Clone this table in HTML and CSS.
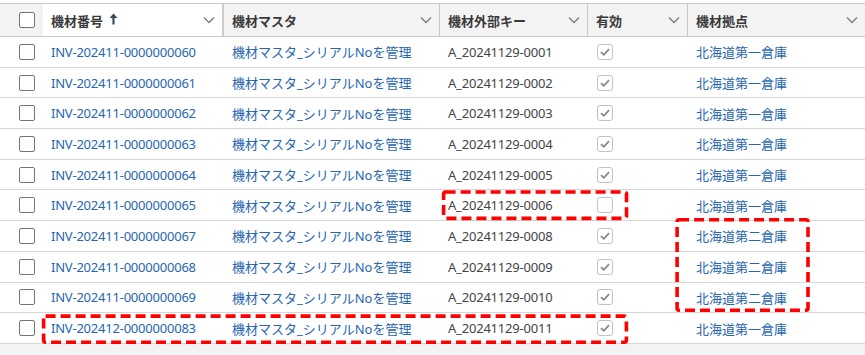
FILE: index.html
```html
<!DOCTYPE html>
<html lang="ja">
<head>
<meta charset="utf-8">
<link rel="stylesheet" href="styles.css">
</head>
<body>
<div class="page">
  <div class="grid">
    <div class="row head">
      <div class="cell cb"><span class="box"></span></div>
      <div class="cell hc sorted"><span class="ht">機材番号<svg class="arrow" width="9" height="12" viewBox="0 0 9 12"><path d="M4.5 0.5 L8.5 5 L5.6 5 L5.6 11.5 L3.4 11.5 L3.4 5 L0.5 5 Z" fill="#3f4a59"/></svg></span><svg class="chev" width="12" height="8" viewBox="0 0 12 8"><path d="M1 1.5 L6 6.5 L11 1.5" fill="none" stroke="#7a7a7a" stroke-width="1.3"/></svg></div>
      <div class="cell hc"><span class="ht">機材マスタ</span><svg class="chev" width="12" height="8" viewBox="0 0 12 8"><path d="M1 1.5 L6 6.5 L11 1.5" fill="none" stroke="#7a7a7a" stroke-width="1.3"/></svg></div>
      <div class="cell hc"><span class="ht">機材外部キー</span><svg class="chev" width="12" height="8" viewBox="0 0 12 8"><path d="M1 1.5 L6 6.5 L11 1.5" fill="none" stroke="#7a7a7a" stroke-width="1.3"/></svg></div>
      <div class="cell hc"><span class="ht">有効</span><svg class="chev" width="12" height="8" viewBox="0 0 12 8"><path d="M1 1.5 L6 6.5 L11 1.5" fill="none" stroke="#7a7a7a" stroke-width="1.3"/></svg></div>
      <div class="cell hc last"><span class="ht">機材拠点</span><svg class="chev" width="12" height="8" viewBox="0 0 12 8"><path d="M1 1.5 L6 6.5 L11 1.5" fill="none" stroke="#7a7a7a" stroke-width="1.3"/></svg></div>
    </div>

    <div class="row"><div class="cell cb"><span class="box"></span></div><div class="cell link num">INV-202411-0000000060</div><div class="cell link">機材マスタ_シリアルNoを管理</div><div class="cell txt">A_20241129-0001</div><div class="cell chk"><span class="ck on"><svg width="10" height="8" viewBox="0 0 10 8"><path d="M1 4.2 L3.8 6.8 L9 1.2" fill="none" stroke="#858585" stroke-width="1.7"/></svg></span></div><div class="cell link">北海道第一倉庫</div></div>
    <div class="row"><div class="cell cb"><span class="box"></span></div><div class="cell link num">INV-202411-0000000061</div><div class="cell link">機材マスタ_シリアルNoを管理</div><div class="cell txt">A_20241129-0002</div><div class="cell chk"><span class="ck on"><svg width="10" height="8" viewBox="0 0 10 8"><path d="M1 4.2 L3.8 6.8 L9 1.2" fill="none" stroke="#858585" stroke-width="1.7"/></svg></span></div><div class="cell link">北海道第一倉庫</div></div>
    <div class="row"><div class="cell cb"><span class="box"></span></div><div class="cell link num">INV-202411-0000000062</div><div class="cell link">機材マスタ_シリアルNoを管理</div><div class="cell txt">A_20241129-0003</div><div class="cell chk"><span class="ck on"><svg width="10" height="8" viewBox="0 0 10 8"><path d="M1 4.2 L3.8 6.8 L9 1.2" fill="none" stroke="#858585" stroke-width="1.7"/></svg></span></div><div class="cell link">北海道第一倉庫</div></div>
    <div class="row"><div class="cell cb"><span class="box"></span></div><div class="cell link num">INV-202411-0000000063</div><div class="cell link">機材マスタ_シリアルNoを管理</div><div class="cell txt">A_20241129-0004</div><div class="cell chk"><span class="ck on"><svg width="10" height="8" viewBox="0 0 10 8"><path d="M1 4.2 L3.8 6.8 L9 1.2" fill="none" stroke="#858585" stroke-width="1.7"/></svg></span></div><div class="cell link">北海道第一倉庫</div></div>
    <div class="row"><div class="cell cb"><span class="box"></span></div><div class="cell link num">INV-202411-0000000064</div><div class="cell link">機材マスタ_シリアルNoを管理</div><div class="cell txt">A_20241129-0005</div><div class="cell chk"><span class="ck on"><svg width="10" height="8" viewBox="0 0 10 8"><path d="M1 4.2 L3.8 6.8 L9 1.2" fill="none" stroke="#858585" stroke-width="1.7"/></svg></span></div><div class="cell link">北海道第一倉庫</div></div>
    <div class="row"><div class="cell cb"><span class="box"></span></div><div class="cell link num">INV-202411-0000000065</div><div class="cell link">機材マスタ_シリアルNoを管理</div><div class="cell txt">A_20241129-0006</div><div class="cell chk"><span class="ck"></span></div><div class="cell link">北海道第一倉庫</div></div>
    <div class="row"><div class="cell cb"><span class="box"></span></div><div class="cell link num">INV-202411-0000000067</div><div class="cell link">機材マスタ_シリアルNoを管理</div><div class="cell txt">A_20241129-0008</div><div class="cell chk"><span class="ck on"><svg width="10" height="8" viewBox="0 0 10 8"><path d="M1 4.2 L3.8 6.8 L9 1.2" fill="none" stroke="#858585" stroke-width="1.7"/></svg></span></div><div class="cell link">北海道第二倉庫</div></div>
    <div class="row"><div class="cell cb"><span class="box"></span></div><div class="cell link num">INV-202411-0000000068</div><div class="cell link">機材マスタ_シリアルNoを管理</div><div class="cell txt">A_20241129-0009</div><div class="cell chk"><span class="ck on"><svg width="10" height="8" viewBox="0 0 10 8"><path d="M1 4.2 L3.8 6.8 L9 1.2" fill="none" stroke="#858585" stroke-width="1.7"/></svg></span></div><div class="cell link">北海道第二倉庫</div></div>
    <div class="row"><div class="cell cb"><span class="box"></span></div><div class="cell link num">INV-202411-0000000069</div><div class="cell link">機材マスタ_シリアルNoを管理</div><div class="cell txt">A_20241129-0010</div><div class="cell chk"><span class="ck on"><svg width="10" height="8" viewBox="0 0 10 8"><path d="M1 4.2 L3.8 6.8 L9 1.2" fill="none" stroke="#858585" stroke-width="1.7"/></svg></span></div><div class="cell link">北海道第二倉庫</div></div>
    <div class="row"><div class="cell cb"><span class="box"></span></div><div class="cell link num">INV-202412-0000000083</div><div class="cell link">機材マスタ_シリアルNoを管理</div><div class="cell txt">A_20241129-0011</div><div class="cell chk"><span class="ck on"><svg width="10" height="8" viewBox="0 0 10 8"><path d="M1 4.2 L3.8 6.8 L9 1.2" fill="none" stroke="#858585" stroke-width="1.7"/></svg></span></div><div class="cell link">北海道第一倉庫</div></div>
  </div>
  <div class="footer"></div>

  <svg class="marks" width="865" height="355" viewBox="0 0 865 355">
    <g fill="none" stroke="#ff0000" stroke-width="3.6" stroke-dasharray="10 5" stroke-linejoin="round">
      <rect x="443.6" y="192" width="182.9" height="26.4" rx="2"/>
      <rect x="677.1" y="219.8" width="130.9" height="90.4" rx="2"/>
      <rect x="43.6" y="316.1" width="582.8" height="26.2" rx="2"/>
    </g>
  </svg>
</div>
</body>
</html>
```

FILE: styles.css
```css
* { box-sizing: border-box; }
html, body { margin: 0; padding: 0; background: #ffffff; }
body {
  font-family: "Noto Sans", "Noto Sans CJK JP", sans-serif;
  font-size: 13px;
  color: #3e3e3e;
}
.page {
  position: relative;
  width: 865px;
  height: 355px;
  padding-top: 3px;
  overflow: hidden;
  display: flex;
  flex-direction: column;
}
.grid {
  border-top: 1px solid #c9c9c9;
  display: flex;
  flex-direction: column;
}
.row {
  display: grid;
  grid-template-columns: 43px 181px 216px 148px 100px 177px;
  height: 30.7px;
  border-bottom: 1px solid #d6d6d6;
  background: #fff;
}
.row.head {
  height: 33px;
  background: #f3f3f3;
  border-bottom: 1px solid #c9c9c9;
}
.cell {
  display: flex;
  align-items: center;
  padding-left: 8px;
  white-space: nowrap;
  overflow: hidden;
}
.cell.cb { justify-content: flex-start; padding-left: 19px; }
.box {
  width: 16px;
  height: 16px;
  border: 1px solid #767676;
  border-radius: 2px;
  background: #fff;
}
.hc {
  justify-content: space-between;
  padding-right: 7px;
  border-right: 1px solid #c8c8c8;
  font-weight: 600;
  color: #3a3a3a;
}
.hc.sorted { background: #ffffff; border-right: 2px solid #c9ccd2; }
.hc.last { border-right: none; }
.ht { display: flex; align-items: center; gap: 6px; }
.arrow { flex: none; margin-top: -2px; }
.chev { flex: none; }
.link { color: #2666b0; }
.num { letter-spacing: -0.22px; }
.txt { color: #444444; letter-spacing: -0.2px; }
.chk { padding-left: 9px; }
.ck {
  width: 16px;
  height: 16px;
  border: 1px solid #c2c2c2;
  border-radius: 3px;
  background: #fff;
  display: flex;
  align-items: center;
  justify-content: center;
}
.footer { flex: 1; background: #f3f3f3; }
.marks { position: absolute; left: 0; top: 0; pointer-events: none; }
```
